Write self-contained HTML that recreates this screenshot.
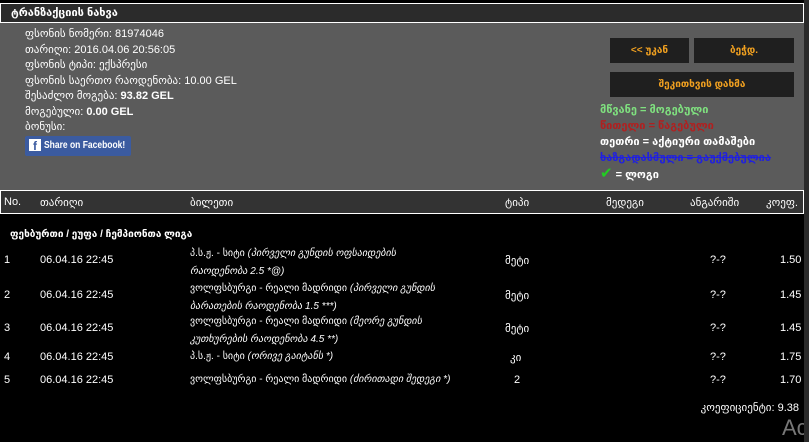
<!DOCTYPE html>
<html><head><meta charset="utf-8"><style>
body{margin:0;width:809px;height:442px;background:#000;overflow:hidden;font-family:"Liberation Sans Narrow","Liberation Sans","DejaVu Sans",sans-serif;font-size:11px;color:#fff;position:relative}
.a{position:absolute;white-space:nowrap}
.hdr{left:0;top:3px;width:792px;height:18px;background:#2b2b2b;border:1px solid #fff;font-weight:bold;font-size:11px;line-height:18px;padding-left:10px;box-sizing:content-box}
.panel{left:0;top:23px;width:804px;height:167px;background:#5b5b5b}
.btn{background:#1f1f1f;color:#f0a020;font-weight:bold;font-size:10px;text-align:center;line-height:25px;height:25px}
.th{left:0;top:190px;width:802px;height:22px;background:#333;border:1px solid #fff}
.scroll{left:804px;top:0;width:5px;height:442px;background:#2a2a2a}
.n{font-family:"Liberation Sans Narrow","Liberation Sans",sans-serif;font-size:11px}
</style></head><body>
<div class="a hdr">ტრანზაქციის ნახვა</div>
<div class="a panel"></div>
<div class="a" style="left:25px;top:27px;line-height:15.5px;font-size:11px">
ფსონის ნომერი: 81974046<br>თარიღი: 2016.04.06 20:56:05<br>ფსონის ტიპი: ექსპრესი<br>ფსონის საერთო რაოდენობა: 10.00 GEL<br>შესაძლო მოგება: <b>93.82 GEL</b><br>მოგებული: <b>0.00 GEL</b><br>ბონუსი:</div>
<div class="a" style="left:25px;top:136px;width:106px;height:20px;background:#3b5ba0;border-radius:2px;font-size:10px;font-weight:bold;line-height:20px;overflow:hidden"><span style="display:inline-block;width:12px;height:12px;background:#fff;color:#3b5ba0;margin:0 3px 0 4px;vertical-align:-2px;text-align:center;line-height:14px;font-size:12px">f</span><span style="display:inline-block;transform:scaleX(0.85);transform-origin:left">Share on Facebook!</span></div>
<div class="a btn" style="left:610px;top:38px;width:79px">&lt;&lt; უკან</div>
<div class="a btn" style="left:694px;top:38px;width:100px">ბეჭდ.</div>
<div class="a btn" style="left:610px;top:72px;width:184px">შეკითხვის დახმა</div>
<div class="a" style="left:600px;top:102px;line-height:16px;font-weight:bold;font-size:11px">
<span style="color:#7fe07f">მწვანე = მოგებული</span><br>
<span style="color:#b02020">წითელი = წაგებული</span><br>
<span style="color:#fff">თეთრი = აქტიური თამაშები</span><br>
<span style="color:#2020e0;text-decoration:line-through">ხაზგადასმული = გაუქმებულია</span><br>
<span style="color:#2c2;font-size:15px">✔</span> <span>= ლოგი</span></div>
<div class="a th"></div>
<div class="a" style="top:196px;left:4px">No.</div>
<div class="a" style="top:196px;left:40px">თარიღი</div>
<div class="a" style="top:196px;left:190px">ბილეთი</div>
<div class="a" style="top:196px;left:505px">ტიპი</div>
<div class="a" style="top:196px;left:606px">მედეგი</div>
<div class="a" style="top:196px;left:690px">ანგარიში</div>
<div class="a" style="top:196px;left:766px">კოეფ.</div>
<div class="a" style="top:229px;left:10px;font-weight:bold;font-size:10px">ფეხბურთი / ეუფა / ჩემპიონთა ლიგა</div>

<div class="a" style="top:254px;left:4px">1</div><div class="a" style="top:254px;left:40px">06.04.16 22:45</div>
<div class="a" style="top:245px;left:190px;line-height:18px;font-size:10px">პ.ს.ჟ. - სიტი <i>(პირველი გუნდის ოფსაიდების<br>რაოდენობა 2.5 *@)</i></div>
<div class="a" style="top:254px;left:505px">მეტი</div><div class="a" style="top:254px;left:710px">?-?</div><div class="a" style="top:254px;left:780px">1.50</div>

<div class="a" style="top:289px;left:4px">2</div><div class="a" style="top:289px;left:40px">06.04.16 22:45</div>
<div class="a" style="top:280px;left:190px;line-height:18px;font-size:10px">ვოლფსბურგი - რეალი მადრიდი <i>(პირველი გუნდის<br>ბარათების რაოდენობა 1.5 ***)</i></div>
<div class="a" style="top:289px;left:505px">მეტი</div><div class="a" style="top:289px;left:710px">?-?</div><div class="a" style="top:289px;left:780px">1.45</div>

<div class="a" style="top:322px;left:4px">3</div><div class="a" style="top:322px;left:40px">06.04.16 22:45</div>
<div class="a" style="top:313px;left:190px;line-height:18px;font-size:10px">ვოლფსბურგი - რეალი მადრიდი <i>(მეორე გუნდის<br>კუთხურების რაოდენობა 4.5 **)</i></div>
<div class="a" style="top:322px;left:505px">მეტი</div><div class="a" style="top:322px;left:710px">?-?</div><div class="a" style="top:322px;left:780px">1.45</div>

<div class="a" style="top:351px;left:4px">4</div><div class="a" style="top:351px;left:40px">06.04.16 22:45</div>
<div class="a" style="top:351px;left:190px;font-size:10px">პ.ს.ჟ. - სიტი <i>(ორივე გაიტანს *)</i></div>
<div class="a" style="top:351px;left:510px">კი</div><div class="a" style="top:351px;left:710px">?-?</div><div class="a" style="top:351px;left:780px">1.75</div>

<div class="a" style="top:374px;left:4px">5</div><div class="a" style="top:374px;left:40px">06.04.16 22:45</div>
<div class="a" style="top:374px;left:190px;font-size:10px">ვოლფსბურგი - რეალი მადრიდი <i>(ძირითადი შედეგი *)</i></div>
<div class="a" style="top:374px;left:514px">2</div><div class="a" style="top:374px;left:710px">?-?</div><div class="a" style="top:374px;left:780px">1.70</div>

<div class="a" style="top:401px;right:10px">კოეფიციენტი: 9.38</div>
<div class="a" style="top:415px;left:782px;color:#777;font-size:22px;font-family:'Liberation Sans',sans-serif">Act</div>
<div class="a scroll"></div>
</body></html>
